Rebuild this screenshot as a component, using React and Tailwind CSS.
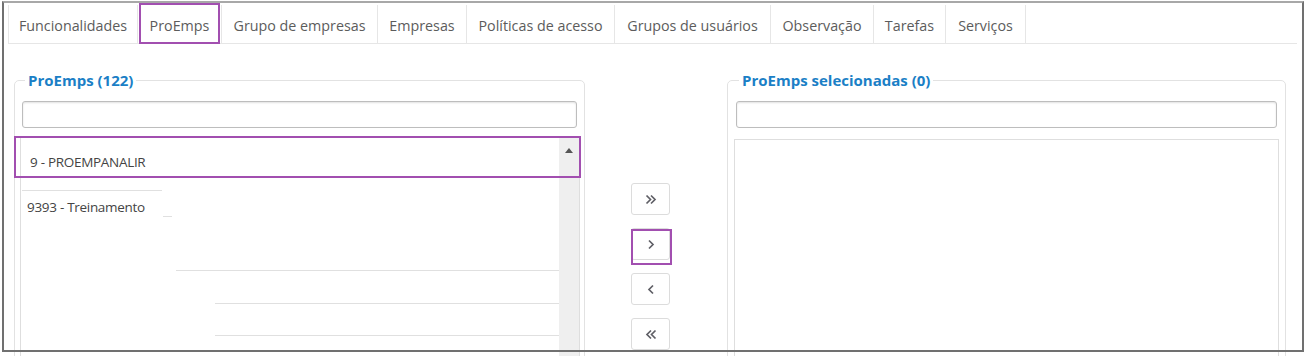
import React from "react";

const tabs = [
  { label: "Funcionalidades", w: "w-[130px]" },
  { label: "ProEmps", w: "w-[84px]", marked: true },
  { label: "Grupo de empresas", w: "w-[156px]" },
  { label: "Empresas", w: "w-[89px]" },
  { label: "Políticas de acesso", w: "w-[148px]" },
  { label: "Grupos de usuários", w: "w-[156px]" },
  { label: "Observação", w: "w-[103px]" },
  { label: "Tarefas", w: "w-[72px]" },
  { label: "Serviços", w: "w-[80px]" },
];

function MoveButton({ children, marked }) {
  return (
    <div className="relative">
      <button className="w-[39px] h-[32px] rounded-[3px] border border-[#dcdcdc] bg-white flex items-center justify-center">
        {children}
      </button>
      {marked && (
        <div className="absolute left-0 top-[1px] w-[41px] h-[36px] border-2 border-[#a24fb0]" />
      )}
    </div>
  );
}

function Chev({ dir, double }) {
  return (
    <svg width={double ? 12 : 8} height="11" viewBox={double ? "0 0 12 11" : "0 0 8 11"} fill="none" stroke="#5f5f66" strokeWidth="1.7">
      {double ? (
        dir === "right" ? (
          <>
            <path d="M1.5 1.5 L5.5 5.5 L1.5 9.5" />
            <path d="M6 1.5 L10 5.5 L6 9.5" />
          </>
        ) : (
          <>
            <path d="M6 1.5 L2 5.5 L6 9.5" />
            <path d="M10.5 1.5 L6.5 5.5 L10.5 9.5" />
          </>
        )
      ) : dir === "right" ? (
        <path d="M2 1.5 L6 5.5 L2 9.5" />
      ) : (
        <path d="M6 1.5 L2 5.5 L6 9.5" />
      )}
    </svg>
  );
}

export default function App() {
  return (
    <div className="relative w-[1305px] h-[356px] overflow-hidden bg-white font-['Open_Sans',sans-serif]">
      {/* tabs */}
      <div className="pt-[5px] pl-[8px] pr-[8px]">
        <div className="flex h-[39px] border-b border-[#e6e6e6]">
          {tabs.map((t, i) => (
            <div
              key={t.label}
              className={`relative ${t.w} flex items-center justify-center pt-[3px] text-[14.3px] text-[#5c5c5c] border-r border-[#e6e6e6] ${i === 0 ? "border-l" : ""}`}
            >
              {t.label}
              {t.marked && (
                <div className="absolute left-[1px] right-[1px] top-[-2px] bottom-[-1px] border-[2.5px] border-[#a24fb0]" />
              )}
            </div>
          ))}
        </div>
      </div>

      {/* panels */}
      <div className="flex mt-[27px] pl-[14px]">
        {/* left fieldset */}
        <fieldset className="w-[571px] h-[300px] border border-[#e2e2e2] rounded-[5px] px-[7px] pb-0 min-w-0">
          <legend className="ml-[3px] px-[3px] text-[15px] font-bold text-[#1b7fc6] leading-[18px]">
            ProEmps (122)
          </legend>
          <div className="mt-[12px] h-[27px] border border-[#bdbdbd] rounded-[3px] shadow-[inset_0_1px_2px_rgba(0,0,0,0.12)]" />
          <div className="relative mt-[9px] -ml-[2px] w-[560px] h-[250px] border border-[#dedede] flex">
            <div className="flex-1 flex flex-col text-[13.5px] text-[#444]">
              <div className="h-[40px] pt-[15px] pl-[9px] leading-[18px] tracking-[-0.3px]">9 - PROEMPANALIR</div>
              <div className="mt-[12px] ml-[1px] w-[140px] h-px bg-[#e0e0e0]" />
              <div className="mt-[7px] pl-[6px] leading-[18px] tracking-[-0.3px]">9393 - Treinamento</div>
              <div className="mt-0 ml-[142px] w-[9px] h-px bg-[#e0e0e0]" />
              <div className="mt-[53px] ml-[155px] w-[383px] h-px bg-[#e0e0e0]" />
              <div className="mt-[32px] ml-[194px] w-[344px] h-px bg-[#e0e0e0]" />
              <div className="mt-[31px] ml-[194px] w-[344px] h-px bg-[#e0e0e0]" />
            </div>
            <div className="w-[20px] bg-[#efefef] flex justify-center pt-[10px]">
              <svg width="8" height="5" viewBox="0 0 8 5">
                <path d="M0 5 L4 0 L8 5 Z" fill="#555" />
              </svg>
            </div>
            <div className="absolute left-[-7px] top-[-2px] w-[567px] h-[42px] border-2 border-[#a24fb0]" />
          </div>
        </fieldset>

        {/* middle buttons */}
        <div className="w-[142px] pl-[46px] pt-[112px] flex flex-col gap-[13px]">
          <MoveButton><Chev dir="right" double /></MoveButton>
          <MoveButton marked><Chev dir="right" /></MoveButton>
          <MoveButton><Chev dir="left" /></MoveButton>
          <MoveButton><Chev dir="left" double /></MoveButton>
        </div>

        {/* right fieldset */}
        <fieldset className="w-[559px] h-[300px] border border-[#e2e2e2] rounded-[5px] px-[8px] pb-0 min-w-0">
          <legend className="ml-[3px] px-[3px] text-[15px] font-bold text-[#1b7fc6] leading-[18px]">
            ProEmps selecionadas (0)
          </legend>
          <div className="mt-[12px] h-[27px] border border-[#bdbdbd] rounded-[3px] shadow-[inset_0_1px_2px_rgba(0,0,0,0.12)]" />
          <div className="mt-[11px] -mx-[2px] h-[250px] border border-[#dedede]" />
        </fieldset>
      </div>

      {/* screenshot frame overlay */}
      <div className="absolute left-[2px] top-[1px] w-[1302px] h-[351px] border-2 border-[#707070] border-t-[#a8a8a8] pointer-events-none" />
    </div>
  );
}
